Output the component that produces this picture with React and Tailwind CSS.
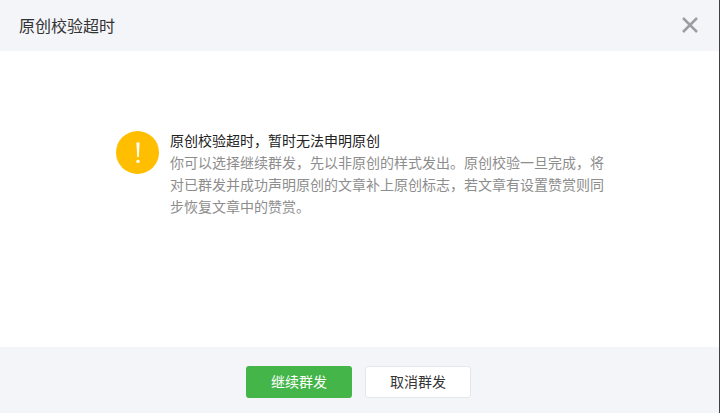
import React from 'react';

export default function App() {
  return (
    <div className="flex h-[413px] w-[720px] flex-col overflow-hidden border-r border-[#404040] bg-white font-['Noto_Sans_CJK_SC',sans-serif]">
      <div className="flex h-[51px] shrink-0 items-center justify-between bg-[#f4f5f9] pb-[2px] pl-[19px] pr-[21px]">
        <h3 className="text-base leading-[24px] text-[#333333]">原创校验超时</h3>
        <svg width="16" height="16" viewBox="0 0 16 16" className="text-[#9a9da3]">
          <path d="M1 1L15 15M15 1L1 15" stroke="currentColor" strokeWidth="2.5" fill="none" />
        </svg>
      </div>

      <div className="flex flex-1 items-start pl-[116px] pt-[80px]">
        <div className="flex h-[43px] w-[43px] shrink-0 items-center justify-center rounded-full bg-[#ffbe00]">
          <svg width="6" height="24" viewBox="0 0 6 24">
            <path d="M1.4 1.5h3.2L3.8 16H2.2z" fill="#fff" />
            <circle cx="3" cy="20.4" r="1.7" fill="#fff" />
          </svg>
        </div>
        <div className="ml-[11px] -mt-[2px] w-[436px] text-sm leading-[22px]">
          <p className="text-[#222222]">原创校验超时，暂时无法申明原创</p>
          <p className="text-[#8d8d8d]">
            你可以选择继续群发，先以非原创的样式发出。原创校验一旦完成，将对已群发并成功声明原创的文章补上原创标志，若文章有设置赞赏则同步恢复文章中的赞赏。
          </p>
        </div>
      </div>

      <div className="flex h-[66px] shrink-0 gap-[13px] bg-[#f4f5f9] pl-[246px] pt-[19px]">
        <button className="h-8 w-[106px] rounded-[3px] bg-[#44b549] pb-[2px] text-sm text-white">继续群发</button>
        <button className="h-8 w-[106px] rounded-[3px] border border-[#e4e8eb] bg-white pb-[2px] text-sm text-[#353535]">取消群发</button>
      </div>
    </div>
  );
}
